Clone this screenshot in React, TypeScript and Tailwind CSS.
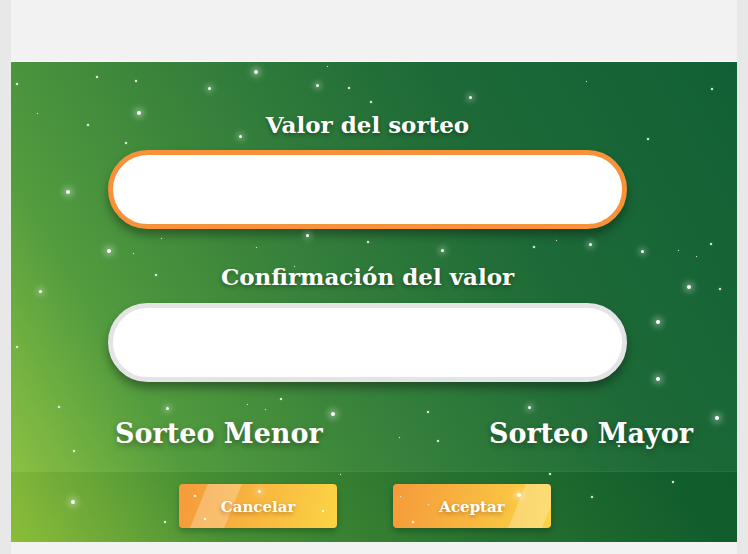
import React from 'react'

// star field: [x, y, size] in page coords, shifted into the panel below
const stars: [number, number, number][] = [
  [17, 84, 2], [97, 77, 2], [136, 81, 2], [209, 88, 3], [256, 72, 4], [317, 85, 3], [349, 88, 2],
  [371, 102, 2], [37, 113, 1], [88, 125, 2], [139, 113, 4], [126, 143, 2], [240, 136, 3], [327, 66, 1],
  [68, 192, 4], [307, 235, 3], [368, 242, 2], [256, 247, 1], [161, 238, 1], [109, 251, 4], [133, 253, 1],
  [156, 275, 2], [294, 266, 1], [40, 291, 3], [470, 97, 3], [586, 81, 1], [712, 89, 2], [648, 139, 2],
  [442, 250, 3], [534, 247, 2], [556, 240, 1], [590, 244, 3], [642, 251, 3], [678, 250, 1], [696, 256, 1],
  [711, 244, 2], [689, 287, 4], [720, 289, 2], [17, 347, 2], [59, 407, 2], [167, 408, 3], [247, 404, 1],
  [281, 399, 2], [265, 409, 1], [333, 414, 4], [74, 451, 2], [340, 474, 1], [73, 502, 4], [165, 522, 2],
  [195, 496, 2], [259, 491, 3], [205, 519, 2], [323, 511, 2], [658, 322, 4], [658, 379, 4], [529, 407, 3],
  [428, 412, 2], [399, 437, 1], [438, 441, 2], [717, 418, 4], [550, 474, 2], [673, 482, 2], [592, 497, 2],
  [519, 495, 4], [428, 504, 1], [400, 496, 1], [413, 522, 2], [619, 446, 2],
]

const slab = { fontFamily: '"DejaVu Serif", "Liberation Serif", serif' }

function Field({ focused }: { focused?: boolean }) {
  return (
    <div
      className={`w-[519px] h-[79px] rounded-full bg-white border-[5px] shadow-[0_6px_10px_rgba(0,0,0,0.35)] ${
        focused ? 'border-[#f7923a]' : 'border-[#e4e4e7]'
      }`}
    />
  )
}

function GoldButton({ label, stripe }: { label: string; stripe: 'left' | 'right' }) {
  return (
    <button className="relative w-[158px] h-[44px] rounded-[4px] overflow-hidden bg-linear-[100deg] from-[#f59a3b] to-[#fbd444] shadow-[0_3px_6px_rgba(0,0,0,0.25)]">
      <span
        className={`absolute top-0 h-full w-[34px] bg-white/25 -skew-x-[22deg] ${
          stripe === 'left' ? 'left-[20px]' : 'left-[124px]'
        }`}
      />
      <span
        className="relative text-white text-[15px] font-bold [text-shadow:0_2px_4px_rgba(120,60,0,0.45)]"
        style={slab}
      >
        {label}
      </span>
    </button>
  )
}

export default function App() {
  return (
    <div className="w-[748px] h-[554px] flex bg-[#f2f2f2]">
      <div className="w-[11px] h-full bg-[#e8e8e8]" />
      <div className="w-[726px] flex flex-col">
        <div className="h-[62px] border-b border-white" />
        <div className="relative h-[480px] overflow-hidden bg-[linear-gradient(60deg,#94c83d_0%,#4b9737_22%,#2d7b33_45%,#14632f_70%,#085a2d_100%)]">
          <div className="relative h-[409px] bg-white/[0.04]">
            <div className="ml-[97px] w-[519px] pt-[48px] flex flex-col items-center text-white">
              <h2
                className="h-[30px] leading-[30px] text-[23px] font-bold [text-shadow:0_2px_4px_rgba(0,0,0,0.35)]"
                style={slab}
              >
                Valor del sorteo
              </h2>
              <div className="mt-[10px]">
                <Field focused />
              </div>
              <h2
                className="mt-[33px] h-[30px] leading-[30px] text-[23px] font-bold [text-shadow:0_2px_4px_rgba(0,0,0,0.35)]"
                style={slab}
              >
                Confirmación del valor
              </h2>
              <div className="mt-[11px]">
                <Field />
              </div>
            </div>
            <div
              className="mt-[32px] h-[40px] pl-[104px] pr-[44px] flex items-center justify-between text-white text-[27px] font-bold [text-shadow:0_3px_6px_rgba(0,0,0,0.35)]"
              style={slab}
            >
              <span>Sorteo Menor</span>
              <span>Sorteo Mayor</span>
            </div>
          </div>

          <div className="relative h-[71px] pt-[12px] pl-[168px] flex gap-[56px] bg-black/[0.05] border-t border-white/10">
            <GoldButton label="Cancelar" stripe="left" />
            <GoldButton label="Aceptar" stripe="right" />
          </div>

          {stars.map(([x, y, s], i) => (
            <span
              key={i}
              className="absolute rounded-full bg-white pointer-events-none"
              style={{
                left: x - 11 - s / 2,
                top: y - 62 - s / 2,
                width: s,
                height: s,
                boxShadow: s >= 3 ? `0 0 ${s + 3}px ${s / 2}px rgba(255,255,255,0.55)` : '0 0 2px rgba(255,255,255,0.6)',
              }}
            />
          ))}
        </div>
        <div className="h-[12px]" />
      </div>
      <div className="w-[11px] h-full bg-[#e8e8e8]" />
    </div>
  )
}
